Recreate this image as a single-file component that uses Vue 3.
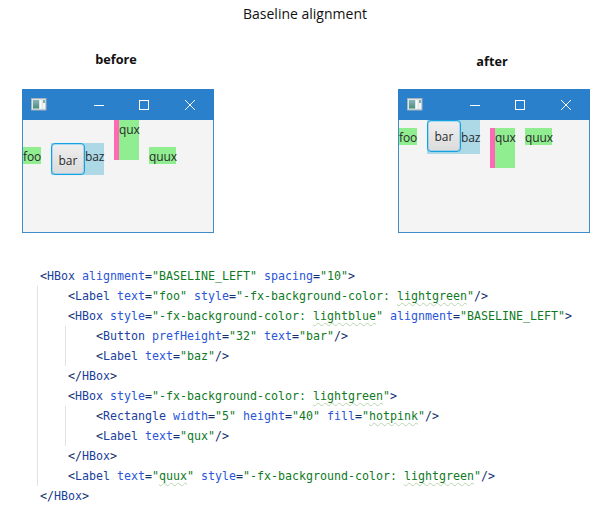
<script setup>
const figures = [
  { name: 'before', cls: 'before' },
  { name: 'after', cls: 'after' }
]
</script>

<template>
  <div class="page">
    <h1 class="title">Baseline alignment</h1>
    <div class="figures">
      <section v-for="f in figures" :key="f.name" class="figure" :class="f.cls">
        <h2 class="caption">{{ f.name }}</h2>
        <div class="window">
          <div class="titlebar">
            <svg class="appicon" width="16" height="13" viewBox="0 0 16 13">
              <defs>
                <linearGradient id="ic" x1="0" y1="0" x2="0" y2="1">
                  <stop offset="0" stop-color="#8ab4bc" />
                  <stop offset="1" stop-color="#4a8f78" />
                </linearGradient>
              </defs>
              <rect x="0.5" y="0.5" width="14.5" height="11.5" fill="#dfe6ea" stroke="#a8b4bc" />
              <rect x="2" y="2" width="6" height="8.5" fill="url(#ic)" />
              <rect x="9" y="2" width="1.5" height="8.5" fill="#ffffff" />
              <rect x="12" y="2" width="2" height="3" fill="#7fb0a4" />
              <rect x="12" y="5" width="2" height="5.5" fill="#f4f6f7" />
            </svg>
            <div class="controls">
              <svg width="10" height="10" viewBox="0 0 10 10"><path d="M0 5.5H10" stroke="#fff" fill="none" /></svg>
              <svg width="10" height="10" viewBox="0 0 10 10"><rect x="0.5" y="0.5" width="9" height="9" stroke="#fff" fill="none" /></svg>
              <svg width="10" height="10" viewBox="0 0 10 10"><path d="M0 0L10 10M10 0L0 10" stroke="#fff" fill="none" /></svg>
            </div>
          </div>
          <div class="content">
            <span class="label green foo">foo</span>
            <div class="blue">
              <button class="btn" type="button">bar</button>
              <span class="label baz">baz</span>
            </div>
            <div class="rectbox">
              <span class="pink"></span>
              <span class="label qux">qux</span>
            </div>
            <span class="label green quux">quux</span>
          </div>
        </div>
      </section>
    </div>

    <div class="code">
      <div class="ln"><i>&lt;</i><b>HBox</b> <u>alignment</u><i>=</i><s>"BASELINE_LEFT"</s> <u>spacing</u><i>=</i><s>"10"</s><i>&gt;</i></div>
      <div class="guide">
        <div class="ln"><i>&lt;</i><b>Label</b> <u>text</u><i>=</i><s>"foo"</s> <u>style</u><i>=</i><s>"-fx-background-color: <em>lightgreen</em>"</s><i>/&gt;</i></div>
        <div class="ln"><i>&lt;</i><b>HBox</b> <u>style</u><i>=</i><s>"-fx-background-color: <em>lightblue</em>"</s> <u>alignment</u><i>=</i><s>"BASELINE_LEFT"</s><i>&gt;</i></div>
        <div class="guide">
          <div class="ln"><i>&lt;</i><b>Button</b> <u>prefHeight</u><i>=</i><s>"32"</s> <u>text</u><i>=</i><s>"bar"</s><i>/&gt;</i></div>
          <div class="ln"><i>&lt;</i><b>Label</b> <u>text</u><i>=</i><s>"baz"</s><i>/&gt;</i></div>
        </div>
        <div class="ln"><i>&lt;/</i><b>HBox</b><i>&gt;</i></div>
        <div class="ln"><i>&lt;</i><b>HBox</b> <u>style</u><i>=</i><s>"-fx-background-color: <em>lightgreen</em>"</s><i>&gt;</i></div>
        <div class="guide">
          <div class="ln"><i>&lt;</i><b>Rectangle</b> <u>width</u><i>=</i><s>"5"</s> <u>height</u><i>=</i><s>"40"</s> <u>fill</u><i>=</i><s>"<em>hotpink</em>"</s><i>/&gt;</i></div>
          <div class="ln"><i>&lt;</i><b>Label</b> <u>text</u><i>=</i><s>"qux"</s><i>/&gt;</i></div>
        </div>
        <div class="ln"><i>&lt;/</i><b>HBox</b><i>&gt;</i></div>
        <div class="ln"><i>&lt;</i><b>Label</b> <u>text</u><i>=</i><s>"<em>quux</em>"</s> <u>style</u><i>=</i><s>"-fx-background-color: <em>lightgreen</em>"</s><i>/&gt;</i></div>
      </div>
      <div class="ln"><i>&lt;/</i><b>HBox</b><i>&gt;</i></div>
    </div>
  </div>
</template>

<style>
html, body { margin: 0; background: #fff; }
</style>

<style scoped>
.page {
  width: 611px;
  height: 525px;
  overflow: hidden;
  background: #fff;
  font-family: "Open Sans", "Noto Sans", sans-serif;
  color: #111;
}
.title {
  margin: 0;
  padding-top: 4px;
  padding-right: 1px;
  height: 21px;
  line-height: 20px;
  text-align: center;
  font-size: 14px;
  font-weight: 400;
}
.figures {
  display: grid;
  grid-template-columns: 192px 192px;
  column-gap: 184px;
  padding-left: 22px;
}
.caption {
  margin: 0;
  padding-right: 4px;
  text-align: center;
  font-size: 12.7px;
  font-weight: 700;
  line-height: 18px;
}
.before .caption { padding-top: 25px; height: 39px; }
.after .caption { padding-top: 27px; height: 37px; }
.window {
  box-sizing: border-box;
  width: 192px;
  height: 144px;
  border: 1px solid #3f8ccb;
  background: #f4f4f4;
}
.titlebar {
  box-sizing: border-box;
  height: 31px;
  margin: -1px -1px 0;
  background: #2a80cb;
  display: flex;
  align-items: center;
  padding: 0 19px 0 9px;
}
.appicon { display: block; }
.controls {
  margin-left: auto;
  display: flex;
  gap: 36px;
}
.controls svg { display: block; }
.controls svg:first-child { margin-right: -1px; }
.content {
  display: flex;
  align-items: flex-start;
  gap: 10px;
  font-size: 12px;
  color: #2a2a2a;
}
.label {
  display: block;
  height: 17px;
  line-height: 19px;
  letter-spacing: -0.1px;
}
.green { background: #90ee90; }
.foo { width: 18px; }
.baz { width: 19px; }
.quux { width: 27px; }
.before .foo, .before .quux { margin-top: 27px; }
.after .foo, .after .quux { margin-top: 8px; }
.blue {
  display: flex;
  align-items: flex-start;
  background: #add8e6;
  height: 32px;
}
.before .blue { margin-top: 23px; }
.after .blue { height: 34px; }
.after .baz { margin-top: 8px; }
.before .baz { margin-top: 4px; }
.btn {
  box-sizing: border-box;
  width: 34px;
  height: 32px;
  padding: 0;
  border: 1px solid #14a2e0;
  border-radius: 4px;
  background: linear-gradient(#efefef, #dbdbdb);
  box-shadow: inset 0 0 0 1px rgba(90, 190, 240, 0.45), 0 0 1px rgba(60, 180, 235, 0.4);
  font: inherit;
  color: #2a2a2a;
}
.before .btn { padding-top: 3px; }
.rectbox {
  display: flex;
  align-items: flex-start;
  height: 40px;
  background: #90ee90;
}
.after .rectbox { margin-top: 8px; }
.pink {
  width: 5px;
  height: 40px;
  background: #ff69b4;
}
.qux { width: 20px; }

.code {
  margin-top: 33px;
  padding-left: 40px;
  font-family: "DejaVu Sans Mono", "Liberation Mono", monospace;
  font-size: 11.63px;
  line-height: 20px;
  white-space: pre;
}
.ln { height: 20px; }
.guide {
  margin-left: -3px;
  padding-left: 30px;
  border-left: 1px solid #e2e2e2;
}
.ln i { font-style: normal; color: #12306e; }
.ln b { font-weight: 400; color: #1a3f9c; }
.ln u { text-decoration: none; color: #2a55d8; }
.ln s { text-decoration: none; color: #0f7a1f; }
.ln em {
  font-style: normal;
  text-decoration: underline wavy #b8d4b0 1px;
  text-underline-offset: 2px;
}
</style>
